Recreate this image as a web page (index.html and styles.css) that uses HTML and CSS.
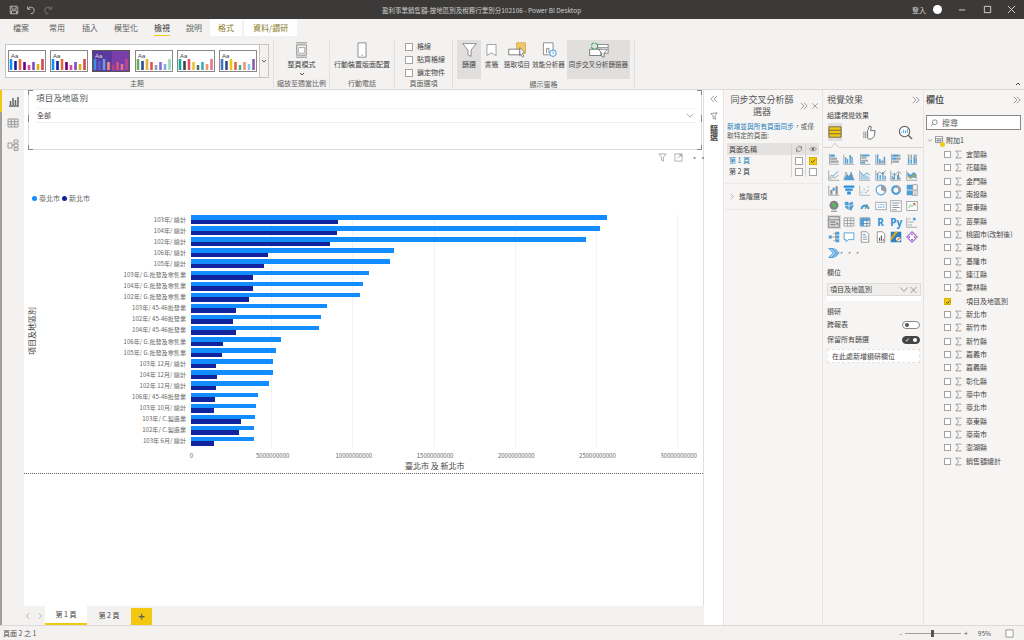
FILE: index.html
```html
<!DOCTYPE html>
<html lang="zh-Hant">
<head>
<meta charset="utf-8">
<title>Power BI Desktop</title>
<link rel="stylesheet" href="styles.css">
</head>
<body>
<svg class="defs" aria-hidden="true">
  <symbol id="dchev" viewBox="0 0 10 10"><path d="M1 1l4 4-4 4M5 1l4 4-4 4" fill="none" stroke="#777" stroke-width=".9"/></symbol>
  <symbol id="lchev" viewBox="0 0 10 10"><path d="M5 1L1 5l4 4M9 1L5 5l4 4" fill="none" stroke="#777" stroke-width=".9"/></symbol>
  <symbol id="sigma" viewBox="0 0 8 10"><path d="M7 1.500V1H1l3 4-3 4h6v-.6" fill="none" stroke="#777" stroke-width=".8"/></symbol>
  <symbol id="v1" viewBox="0 0 16 16"><path d="M2 1v14h13" fill="none" stroke="#8c9297"/><rect x="3" y="2" width="6" height="3" fill="#4f9fd6"/><rect x="3" y="6" width="9" height="3" fill="#a0a5a9"/><rect x="3" y="10" width="11" height="3" fill="#a0a5a9"/></symbol>
  <symbol id="v2" viewBox="0 0 16 16"><path d="M1 2v13h14" fill="none" stroke="#8c9297"/><path d="M3.500 14V6M6 14V8M9.500 14V3M12 14V5" stroke="#4f9fd6" stroke-width="1.800"/><path d="M3.500 8V6M9.500 6V3" stroke="#8c9297" stroke-width="1.800"/></symbol>
  <symbol id="v3" viewBox="0 0 16 16"><path d="M2 1v14h13" fill="none" stroke="#8c9297"/><rect x="3" y="2" width="11" height="2.500" fill="#4f9fd6"/><rect x="3" y="5" width="7" height="2.500" fill="#a0a5a9"/><rect x="3" y="9" width="9" height="2.500" fill="#a0a5a9"/><rect x="3" y="12" width="5" height="2" fill="#4f9fd6"/></symbol>
  <symbol id="v4" viewBox="0 0 16 16"><path d="M1 2v13h14" fill="none" stroke="#8c9297"/><path d="M3.500 14V2M6.500 14V8M9.500 14V10M12.500 14V5" stroke="#4f9fd6" stroke-width="2"/><path d="M6.500 14V11M12.500 14V9" stroke="#8c9297" stroke-width="2"/></symbol>
  <symbol id="v5" viewBox="0 0 16 16"><path d="M2 1v14" fill="none" stroke="#8c9297"/><rect x="3" y="2" width="8" height="3" fill="#4f9fd6"/><rect x="11" y="2" width="3" height="3" fill="#a0a5a9"/><rect x="3" y="6" width="5" height="3" fill="#4f9fd6"/><rect x="8" y="6" width="6" height="3" fill="#a0a5a9"/><rect x="3" y="10" width="9" height="3" fill="#a0a5a9"/></symbol>
  <symbol id="v6" viewBox="0 0 16 16"><path d="M1 15h14" stroke="#8c9297"/><path d="M3.500 14V7M7 14V9M11 14V5M13.500 14V8" stroke="#4f9fd6" stroke-width="2"/><path d="M3.500 7V2M7 9V2M11 5V2M13.500 8V2" stroke="#a0a5a9" stroke-width="2"/></symbol>
  <symbol id="v7" viewBox="0 0 16 16"><path d="M1 2v13h14" fill="none" stroke="#8c9297"/><path d="M2 11l3-3 2 2 3-4 4-3" fill="none" stroke="#4f9fd6" stroke-width="1.200"/><path d="M2 13l4-2 3 1 5-4" fill="none" stroke="#8c9297"/></symbol>
  <symbol id="v8" viewBox="0 0 16 16"><path d="M1 15l4-8 3 3 3-7 4 12z" fill="#4f9fd6"/><path d="M1 15l3-11 3 6 3-2 5 7" fill="none" stroke="#8c9297"/></symbol>
  <symbol id="v9" viewBox="0 0 16 16"><path d="M1 2v13h14" fill="none" stroke="#8c9297"/><path d="M2 5l3 4 4-1 5 3v3H2z" fill="#a9cfe9"/><path d="M2 4l4 5 4-4 4 3" fill="none" stroke="#4f9fd6" stroke-width="1.300"/></symbol>
  <symbol id="v10" viewBox="0 0 16 16"><path d="M1 2v13h14" fill="none" stroke="#8c9297"/><path d="M3.500 14V6M7 14V8M10.500 14V4M13.500 14V9" stroke="#4f9fd6" stroke-width="1.800"/><path d="M2 7l4-3 4 3 4-5" fill="none" stroke="#777"/></symbol>
  <symbol id="v11" viewBox="0 0 16 16"><path d="M1 2v13h14" fill="none" stroke="#8c9297"/><path d="M3 14V9M6 14V5M10 14V8M13 14V11" stroke="#4f9fd6" stroke-width="1.500"/><path d="M4.500 14V11M11.500 14V5" stroke="#8c9297" stroke-width="1.500"/><path d="M2 6l5 2 4-5 4 3" fill="none" stroke="#777" stroke-width=".8"/></symbol>
  <symbol id="v12" viewBox="0 0 16 16"><path d="M1 2v13h14" fill="none" stroke="#8c9297"/><path d="M2 4l4 4 4-4 4 3v6l-4-2-4 2-4-3z" fill="#4f9fd6"/><path d="M2 9l4 4 4-6 4 5" fill="none" stroke="#e0a91c" stroke-width="1.300"/></symbol>
  <symbol id="v13" viewBox="0 0 16 16"><path d="M1 2v13h14" fill="none" stroke="#8c9297"/><rect x="3" y="8" width="3" height="6" fill="#8c9297"/><rect x="6" y="5" width="3" height="4" fill="#4f9fd6"/><rect x="10" y="3" width="3" height="11" fill="#8c9297"/></symbol>
  <symbol id="v14" viewBox="0 0 16 16"><path d="M1 2h14v3H1z" fill="#2f8fd8"/><path d="M3 6h10v3H3z" fill="#2f8fd8"/><path d="M5.500 10h5v4h-5z" fill="#2f8fd8"/></symbol>
  <symbol id="v15" viewBox="0 0 16 16"><path d="M1 2v13h14" fill="none" stroke="#a0a5a9"/><g fill="#a9cfe9"><circle cx="4" cy="11" r="1.200"/><circle cx="7" cy="7" r="1.200"/><circle cx="12" cy="4" r="1.200"/></g><g fill="#8c9297"><circle cx="9" cy="11" r="1"/><circle cx="12" cy="9" r="1"/></g></symbol>
  <symbol id="v16" viewBox="0 0 16 16"><circle cx="8" cy="8" r="6.500" fill="#fff" stroke="#4f9fd6" stroke-width="1.500"/><path d="M8 8V1.500A6.500 6.500 0 0 1 14 11z" fill="#9aa0a5"/></symbol>
  <symbol id="v17" viewBox="0 0 16 16"><circle cx="8" cy="8" r="5" fill="none" stroke="#4f9fd6" stroke-width="3"/><path d="M8 3a5 5 0 0 1 4.500 7" fill="none" stroke="#9aa0a5" stroke-width="3"/></symbol>
  <symbol id="v18" viewBox="0 0 16 16"><rect x="1" y="1" width="8" height="14" fill="#4f9fd6"/><rect x="9" y="1" width="6" height="14" fill="none" stroke="#8c9297"/><path d="M9 8h6M12 8v7" stroke="#8c9297"/><path d="M1 8h8" stroke="#fff"/></symbol>
  <symbol id="v19" viewBox="0 0 16 16"><circle cx="8" cy="7" r="6" fill="#7e8488"/><path d="M5 4l5 1 1 4-3 2-2-3z" fill="#5cb85c"/><path d="M4 15h8" stroke="#8c9297" stroke-width="1.400"/></symbol>
  <symbol id="v20" viewBox="0 0 16 16"><path d="M2 3l4-1 2 2 5-2 1 6-3 6-4-1-4-3z" fill="#4f9fd6"/><path d="M2 7l6 1 6-2M8 4v10" stroke="#fff" stroke-width=".8" fill="none"/></symbol>
  <symbol id="v21" viewBox="0 0 16 16"><path d="M2 12a6 6 0 0 1 12 0h-3a3 3 0 0 0-6 0z" fill="#4f9fd6"/><path d="M8 12l3-6" stroke="#666" stroke-width="1.200"/></symbol>
  <symbol id="v23" viewBox="0 0 16 16"><rect x="1" y="1" width="14" height="14" fill="#fff" stroke="#8c9297"/><path d="M3 4h10M3 7h8M3 10h10M3 13h6" stroke="#6e7478"/></symbol>
  <symbol id="v24" viewBox="0 0 16 16"><rect x="1" y="2" width="14" height="12" fill="#fff" stroke="#8c9297"/><path d="M3 11l3-5 2 3 3-4 2 3" fill="none" stroke="#5cb85c"/><path d="M9 4h4l-2 3z" fill="#d9534f"/></symbol>
  <symbol id="v25" viewBox="0 0 16 16"><rect x="1" y="1" width="14" height="14" fill="none" stroke="#6e7478"/><path d="M1 5h14" stroke="#6e7478"/><rect x="3" y="7" width="7" height="2" fill="#8c9297"/><rect x="3" y="10.500" width="7" height="2" fill="#8c9297"/><path d="M11 8l3 3-2 1z" fill="#555"/></symbol>
  <symbol id="v26" viewBox="0 0 16 16"><path d="M1.500 2.500h13v11h-13zM1.500 6h13M1.500 10h13M6 2.500v11M10.500 2.500v11" fill="none" stroke="#8c9297"/></symbol>
  <symbol id="v27" viewBox="0 0 16 16"><path d="M1.500 2.500h13v11h-13zM1.500 6h13M1.500 10h13M6 2.500v11M10.500 2.500v11" fill="none" stroke="#5b7f99"/><rect x="2" y="3" width="12" height="3" fill="#4f9fd6"/><rect x="2" y="6" width="4" height="7" fill="#4f9fd6"/></symbol>
  <symbol id="v30" viewBox="0 0 16 16"><path d="M1 2v13h14" fill="none" stroke="#8c9297"/><path d="M3 12h5M3 8h7M3 4h3" stroke="#8c9297"/><circle cx="11" cy="4" r="2" fill="#4f9fd6"/></symbol>
  <symbol id="v31" viewBox="0 0 16 16"><rect x="1" y="6" width="4" height="4" fill="#4f9fd6"/><rect x="10" y="1" width="5" height="4" fill="#4f9fd6"/><rect x="10" y="6" width="5" height="4" fill="#4f9fd6"/><rect x="10" y="11" width="5" height="4" fill="#4f9fd6"/><path d="M5 8h5M7 3h3v10H7" fill="none" stroke="#8c9297"/></symbol>
  <symbol id="v32" viewBox="0 0 16 16"><path d="M1.500 2.500h13v9H7l-3 3v-3H1.500z" fill="#fff" stroke="#4f9fd6" stroke-width="1.200"/></symbol>
  <symbol id="v33" viewBox="0 0 16 16"><path d="M3 1h7l3 3v11H3z" fill="#fff" stroke="#777"/><path d="M5 5h4" stroke="#4f9fd6" stroke-width="1.500"/><path d="M5 8h6M5 11h6" stroke="#777"/></symbol>
  <symbol id="v34" viewBox="0 0 16 16"><path d="M3 1h7l3 3v11H3z" fill="#fff" stroke="#777"/><path d="M6 13V9M8.500 13V6M11 13v-2" stroke="#555" stroke-width="1.500"/></symbol>
  <symbol id="v35" viewBox="0 0 16 16"><rect x="1" y="1" width="14" height="14" fill="#2c7fc1"/><path d="M1 9l6-8h4L1 13z" fill="#e0a91c"/><circle cx="11" cy="11" r="3" fill="#fff"/><path d="M9 13l4-4" stroke="#e07b1c" stroke-width="1.500"/></symbol>
  <symbol id="v36" viewBox="0 0 16 16"><path d="M8 1l7 7-7 7-7-7z" fill="#fff" stroke="#a670c9" stroke-width="1.500"/><circle cx="8" cy="4.500" r="1.300" fill="#c06bc0"/><circle cx="4.500" cy="8" r="1.300" fill="#8a6bd0"/><circle cx="11.500" cy="8" r="1.300" fill="#d46a9a"/><circle cx="8" cy="11.500" r="1.300" fill="#7a6bd0"/></symbol>
  <symbol id="v37" viewBox="0 0 16 16"><path d="M1 2h6l6 6-6 6H1l6-6z" fill="#a9cfe9" stroke="#2f8fd8"/><path d="M5 2l6 6-6 6M9 2l6 6-6 6" fill="none" stroke="#2f8fd8" stroke-width="1.200"/></symbol>
</svg>

<header class="titlebar">
  <div class="qat">
    <svg class="qi" viewBox="0 0 12 12"><path d="M1.500 1.500h8l1 1v8h-9zM3.500 1.500v3.500h5v-3.500M3 10.500V7h6v3.500" fill="none" stroke="#c8c6c4"/></svg>
    <svg class="qi" viewBox="0 0 12 12"><path d="M2 1.500v3.500h3.500M2.200 5A4 4 0 1 1 5.500 10.500" fill="none" stroke="#c8c6c4"/></svg>
    <svg class="qi" viewBox="0 0 12 12"><path d="M10 1.500v3.500H6.500M9.800 5A4 4 0 1 0 6.500 10.500" fill="none" stroke="#807e7c"/></svg>
  </div>
  <div class="doc-title">盈利事業銷售額-按地區別及稅務行業別分102106 - Power BI Desktop</div>
  <div class="win">
    <span class="signin">登入</span><span class="avatar"></span>
    <svg class="wi" viewBox="0 0 10 10"><path d="M1 5.500h7" stroke="#ddd"/></svg>
    <svg class="wi" viewBox="0 0 10 10"><path d="M1.500 1.500h7v7h-7z" fill="none" stroke="#ddd"/></svg>
    <svg class="wi" viewBox="0 0 10 10"><path d="M1 1l8 8M9 1l-8 8" stroke="#ddd"/></svg>
  </div>
</header>

<nav class="tabs">
  <span class="tab">檔案</span>
  <span class="tab t-home">常用</span>
  <span class="tab">插入</span>
  <span class="tab t-tight">模型化</span>
  <span class="tab t-tight tab-active">檢視</span>
  <span class="tab t-tight">說明</span>
  <span class="tab tab-ctx">格式</span>
  <span class="tab tab-ctx tab-ctx2">資料/鑽研</span>
</nav>

<section class="ribbon">
  <div class="group g-theme">
    <div class="gallery">
      <div class="thumbs">
        <svg class="thumb" viewBox="0 0 38 22"><rect x=".5" y=".5" width="37" height="21" fill="#fff" stroke="#8a8886"/><text x="3" y="8" font-size="6" fill="#444" font-family="Liberation Sans">Aa</text><path d="M3 20V9" stroke="#118dff" stroke-width="2.600"/><path d="M7.500 20v-9" stroke="#12239e" stroke-width="2.600"/><path d="M12 20V9" stroke="#e66c37" stroke-width="2.600"/><path d="M16.500 20v-8" stroke="#6b007b" stroke-width="2.600"/><path d="M21 20v-5" stroke="#e044a7" stroke-width="2.600"/><path d="M25.500 20v-8" stroke="#744ec2" stroke-width="2.600"/><path d="M30 20v-6" stroke="#d9b300" stroke-width="2.600"/><path d="M34.500 20V9" stroke="#d64550" stroke-width="2.600"/></svg>
        <svg class="thumb" viewBox="0 0 38 22"><rect x=".5" y=".5" width="37" height="21" fill="#fff" stroke="#8a8886"/><text x="3" y="8" font-size="6" fill="#444" font-family="Liberation Sans">Aa</text><path d="M3 20V9" stroke="#118dff" stroke-width="2.600"/><path d="M7.500 20v-9" stroke="#12239e" stroke-width="2.600"/><path d="M12 20V9" stroke="#e66c37" stroke-width="2.600"/><path d="M16.500 20v-8" stroke="#6b007b" stroke-width="2.600"/><path d="M21 20v-5" stroke="#e044a7" stroke-width="2.600"/><path d="M25.500 20v-8" stroke="#744ec2" stroke-width="2.600"/><path d="M30 20v-6" stroke="#d9b300" stroke-width="2.600"/><path d="M34.500 20V9" stroke="#d64550" stroke-width="2.600"/></svg>
        <svg class="thumb" viewBox="0 0 38 22"><rect x=".5" y=".5" width="37" height="21" fill="#5a3a9e" stroke="#555"/><rect x="20" y="1" width="17" height="20" fill="#7a3ea8"/><text x="3" y="8" font-size="6" fill="#ddd" font-family="Liberation Sans">Aa</text><path d="M3 20V9" stroke="#3f8fdc" stroke-width="2.600"/><path d="M7.500 20v-9" stroke="#4a62c9" stroke-width="2.600"/><path d="M12 20V9" stroke="#6c9be0" stroke-width="2.600"/><path d="M16.500 20v-8" stroke="#f0926e" stroke-width="2.600"/><path d="M21 20v-5" stroke="#c0407a" stroke-width="2.600"/><path d="M25.500 20v-8" stroke="#d8527a" stroke-width="2.600"/><path d="M30 20v-6" stroke="#e07b8a" stroke-width="2.600"/><path d="M34.500 20V9" stroke="#b84a90" stroke-width="2.600"/></svg>
        <svg class="thumb" viewBox="0 0 38 22"><rect x=".5" y=".5" width="37" height="21" fill="#fff" stroke="#8a8886"/><text x="3" y="8" font-size="6" fill="#444" font-family="Liberation Sans">Aa</text><path d="M3 20V9" stroke="#5eb35c" stroke-width="2.600"/><path d="M7.500 20v-9" stroke="#2f4b8f" stroke-width="2.600"/><path d="M12 20V9" stroke="#e3b23c" stroke-width="2.600"/><path d="M16.500 20v-8" stroke="#d9534f" stroke-width="2.600"/><path d="M21 20v-5" stroke="#8aa0b8" stroke-width="2.600"/><path d="M25.500 20v-8" stroke="#8a6bd0" stroke-width="2.600"/><path d="M30 20v-6" stroke="#7fb0d8" stroke-width="2.600"/><path d="M34.500 20V9" stroke="#9bd6b8" stroke-width="2.600"/></svg>
        <svg class="thumb" viewBox="0 0 38 22"><rect x=".5" y=".5" width="37" height="21" fill="#fff" stroke="#8a8886"/><text x="3" y="8" font-size="6" fill="#444" font-family="Liberation Sans">Aa</text><path d="M3 20V9" stroke="#13a89e" stroke-width="2.600"/><path d="M7.500 20v-9" stroke="#37474f" stroke-width="2.600"/><path d="M12 20V9" stroke="#e6505a" stroke-width="2.600"/><path d="M16.500 20v-8" stroke="#e8c33a" stroke-width="2.600"/><path d="M21 20v-5" stroke="#5a6b75" stroke-width="2.600"/><path d="M25.500 20v-8" stroke="#2fb5a8" stroke-width="2.600"/><path d="M30 20v-6" stroke="#f0926e" stroke-width="2.600"/><path d="M34.500 20V9" stroke="#e07a8a" stroke-width="2.600"/></svg>
        <svg class="thumb" viewBox="0 0 38 22"><rect x=".5" y=".5" width="37" height="21" fill="#fff" stroke="#8a8886"/><text x="3" y="8" font-size="6" fill="#444" font-family="Liberation Sans">Aa</text><path d="M3 20V9" stroke="#4472c4" stroke-width="2.600"/><path d="M7.500 20v-9" stroke="#2f4b8f" stroke-width="2.600"/><path d="M12 20V9" stroke="#f2c511" stroke-width="2.600"/><path d="M16.500 20v-8" stroke="#e6603c" stroke-width="2.600"/><path d="M21 20v-5" stroke="#3fb28f" stroke-width="2.600"/><path d="M25.500 20v-8" stroke="#f0926e" stroke-width="2.600"/><path d="M30 20v-6" stroke="#8ac6e8" stroke-width="2.600"/><path d="M34.500 20V9" stroke="#8a5fa8" stroke-width="2.600"/></svg>
      </div>
      <div class="gal-more"><svg class="mini" viewBox="0 0 6 6"><path d="M1 2l2 2 2-2" fill="none" stroke="#555"/></svg></div>
    </div>
    <div class="g-label">主題</div>
  </div>
  <div class="group g-scale">
    <div class="g-body">
      <div class="rbtn">
        <svg class="ricon" viewBox="0 0 20 20"><path d="M3 1h14M3 19h14M4 3.500h12v13H4z" fill="none" stroke="#777"/><path d="M6 7h8v7H6z" fill="#fff" stroke="#999"/></svg>
        <span>整頁模式</span>
        <svg class="mini" viewBox="0 0 6 6"><path d="M1 2l2 2 2-2" fill="none" stroke="#555"/></svg>
      </div>
    </div>
    <div class="g-label">縮放至適當比例</div>
  </div>
  <div class="group g-mobile">
    <div class="g-body">
      <div class="rbtn">
        <svg class="ricon" viewBox="4 0 12 20"><path d="M5 1h10v18H5z" fill="#fff" stroke="#777"/><path d="M9 16.500h2" stroke="#777"/></svg>
        <span>行動裝置版面配置</span>
      </div>
    </div>
    <div class="g-label">行動電話</div>
  </div>
  <div class="group g-page">
    <div class="checks">
      <label class="chk"><i class="box"></i>格線</label>
      <label class="chk"><i class="box"></i>貼齊格線</label>
      <label class="chk"><i class="box"></i>鎖定物件</label>
    </div>
    <div class="g-label">頁面選項</div>
  </div>
  <div class="group g-panes">
    <div class="g-body panes">
      <div class="rbtn pane pane-filter on">
        <svg class="ricon" viewBox="0 0 20 20"><path d="M1.500 2h17l-6.500 8v8l-4-2v-6z" fill="#fff" stroke="#777"/></svg>
        <span>篩選</span>
      </div>
      <div class="rbtn pane pane-book">
        <svg class="ricon" viewBox="0 0 20 20"><path d="M3 1.500h14v17l-7-4-7 4z" fill="#fff" stroke="#777"/></svg>
        <span>書籤</span>
      </div>
      <div class="rbtn pane pane-sel">
        <svg class="ricon" viewBox="0 0 28 20"><rect x="13" y="1" width="11" height="13" fill="#f2c66d" stroke="#d9a63a"/><path d="M3 9h14v7H3z" fill="#fff" stroke="#666"/><path d="M17 7l6 6-3 1 2 4-2 1-2-4-1 2z" fill="#fff" stroke="#555" stroke-width=".8"/></svg>
        <span>選取項目</span>
      </div>
      <div class="rbtn pane pane-perf">
        <svg class="ricon" viewBox="0 0 24 20"><path d="M5 1h12v15H5z" fill="#fff" stroke="#777"/><path d="M9 14V8h3v6" fill="none" stroke="#777"/><circle cx="17" cy="14" r="4" fill="#fff" stroke="#3b93d6" stroke-width="1.200"/><path d="M17 12v2h1.500" fill="none" stroke="#3b93d6"/></svg>
        <span>效能分析器</span>
      </div>
      <div class="rbtn pane pane-sync on">
        <svg class="ricon" viewBox="0 0 28 20"><rect x="13" y="3" width="13" height="11" fill="#fff" stroke="#777"/><path d="M13 7h13" stroke="#777"/><rect x="3" y="9" width="14" height="8" fill="#fff" stroke="#666"/><path d="M14 9h11l-4 5v5l-3-1v-4z" fill="#fff" stroke="#666"/><circle cx="9" cy="5" r="4" fill="none" stroke="#3fa35c" stroke-width="1.300" stroke-dasharray="5 1.500"/></svg>
        <span>同步交叉分析篩選器</span>
      </div>
    </div>
    <div class="g-label">顯示窗格</div>
  </div>
  <svg class="collapse" viewBox="0 0 6 6"><path d="M1 4l2-2 2 2" fill="none" stroke="#444"/></svg>
</section>

<main class="main">
  <aside class="rail">
    <div class="rail-item rail-on"><svg class="rail-i" viewBox="0 0 12 12"><path d="M1 11h10M2.500 10V6M5 10V3M7.500 10V5M10 10V2" stroke="#666" stroke-width="1.500"/></svg></div>
    <div class="rail-item"><svg class="rail-i" viewBox="0 0 12 12"><path d="M1 2h10v8H1zM1 4.700h10M1 7.300h10M4.300 2v8M7.700 2v8" fill="none" stroke="#888" stroke-width=".8"/></svg></div>
    <div class="rail-item"><svg class="rail-i" viewBox="0 0 12 12"><path d="M1 4h4v5H1zM7 1h4v3H7zM7 5h4v3H7zM7 9h4v2.500H7zM5 6h2" fill="none" stroke="#888" stroke-width=".8"/></svg></div>
  </aside>

  <div class="canvas-col">
    <div class="canvas">
      <div class="slicer">
        <i class="h h-tl"></i><i class="h h-tr"></i><i class="h h-bl"></i><i class="h h-br"></i><i class="h h-ml"></i><i class="h h-mr"></i>
        <div class="slicer-title">項目及地區別</div>
        <div class="slicer-drop"><span>全部</span><svg class="drop-i" viewBox="0 0 10 6"><path d="M1 1l4 4 4-4" fill="none" stroke="#777" stroke-width=".8"/></svg></div>
      </div>

      <div class="visual">
        <div class="vis-tools">
          <svg class="ti" viewBox="0 0 10 10"><path d="M1 1h8L6 5v4L4 8V5z" fill="none" stroke="#888" stroke-width=".7"/></svg>
          <svg class="ti" viewBox="0 0 10 10"><path d="M1 1h8v8H1zM4 6l4-4M5.500 2H8v2.500" fill="none" stroke="#888" stroke-width=".7"/></svg>
          <span class="dots">···</span>
        </div>
        <div class="legend">
          <i class="dot d-l"></i><span>臺北市</span><i class="dot d-d"></i><span>新北市</span>
        </div>
        <div class="chart-body">
          <div class="ytitle">項目及地區別</div>
          <div class="rows">
            <div class="row"><span class="rl">103年/ 總計</span><span class="rb"><i class="b bl" style="width:416px"></i><i class="b bd" style="width:147px"></i></span></div>
            <div class="row"><span class="rl">104年/ 總計</span><span class="rb"><i class="b bl" style="width:409px"></i><i class="b bd" style="width:146px"></i></span></div>
            <div class="row"><span class="rl">102年/ 總計</span><span class="rb"><i class="b bl" style="width:395px"></i><i class="b bd" style="width:139px"></i></span></div>
            <div class="row"><span class="rl">106年/ 總計</span><span class="rb"><i class="b bl" style="width:203px"></i><i class="b bd" style="width:77px"></i></span></div>
            <div class="row"><span class="rl">105年/ 總計</span><span class="rb"><i class="b bl" style="width:199px"></i><i class="b bd" style="width:73px"></i></span></div>
            <div class="row"><span class="rl">103年/ G.批發及零售業</span><span class="rb"><i class="b bl" style="width:178px"></i><i class="b bd" style="width:62px"></i></span></div>
            <div class="row"><span class="rl">104年/ G.批發及零售業</span><span class="rb"><i class="b bl" style="width:172px"></i><i class="b bd" style="width:62px"></i></span></div>
            <div class="row"><span class="rl">102年/ G.批發及零售業</span><span class="rb"><i class="b bl" style="width:169px"></i><i class="b bd" style="width:58px"></i></span></div>
            <div class="row"><span class="rl">103年/ 45-46批發業</span><span class="rb"><i class="b bl" style="width:136px"></i><i class="b bd" style="width:45px"></i></span></div>
            <div class="row"><span class="rl">102年/ 45-46批發業</span><span class="rb"><i class="b bl" style="width:130px"></i><i class="b bd" style="width:42px"></i></span></div>
            <div class="row"><span class="rl">104年/ 45-46批發業</span><span class="rb"><i class="b bl" style="width:128px"></i><i class="b bd" style="width:45px"></i></span></div>
            <div class="row"><span class="rl">106年/ G.批發及零售業</span><span class="rb"><i class="b bl" style="width:90px"></i><i class="b bd" style="width:32px"></i></span></div>
            <div class="row"><span class="rl">105年/ G.批發及零售業</span><span class="rb"><i class="b bl" style="width:85px"></i><i class="b bd" style="width:31px"></i></span></div>
            <div class="row"><span class="rl">103年 12月/ 總計</span><span class="rb"><i class="b bl" style="width:82px"></i><i class="b bd" style="width:25px"></i></span></div>
            <div class="row"><span class="rl">104年 12月/ 總計</span><span class="rb"><i class="b bl" style="width:82px"></i><i class="b bd" style="width:26px"></i></span></div>
            <div class="row"><span class="rl">102年 12月/ 總計</span><span class="rb"><i class="b bl" style="width:78px"></i><i class="b bd" style="width:25px"></i></span></div>
            <div class="row"><span class="rl">106年/ 45-46批發業</span><span class="rb"><i class="b bl" style="width:67px"></i><i class="b bd" style="width:24px"></i></span></div>
            <div class="row"><span class="rl">103年 10月/ 總計</span><span class="rb"><i class="b bl" style="width:65px"></i><i class="b bd" style="width:23px"></i></span></div>
            <div class="row"><span class="rl">103年/ C.製造業</span><span class="rb"><i class="b bl" style="width:64px"></i><i class="b bd" style="width:50px"></i></span></div>
            <div class="row"><span class="rl">102年/ C.製造業</span><span class="rb"><i class="b bl" style="width:63px"></i><i class="b bd" style="width:48px"></i></span></div>
            <div class="row"><span class="rl">103年 6月/ 總計</span><span class="rb"><i class="b bl" style="width:63px"></i><i class="b bd" style="width:23px"></i></span></div>
          </div>
        </div>
        <div class="axis">
          <span>0</span><span>5000000000</span><span>10000000000</span><span>15000000000</span><span>20000000000</span><span>25000000000</span><span>30000000000</span>
        </div>
        <div class="axis-title">臺北市 及 新北市</div>
      </div>
    </div>
    <div class="pagebar">
      <svg class="pa" viewBox="0 0 6 8"><path d="M4 1L1.500 4 4 7" fill="none" stroke="#bbb"/></svg>
      <svg class="pa" viewBox="0 0 6 8"><path d="M2 1l2.500 3L2 7" fill="none" stroke="#bbb"/></svg>
      <span class="ptab ptab-on">第 1 頁</span>
      <span class="ptab">第 2 頁</span>
      <span class="padd">+</span>
    </div>
  </div>

  <div class="filter-strip">
    <svg class="fs-i" viewBox="0 0 10 10"><use href="#lchev"/></svg>
    <svg class="fs-f" viewBox="0 0 10 10"><path d="M1 2l8-1-3 4 1 4-3-1V5z" fill="none" stroke="#666" stroke-width=".8"/></svg>
    <span class="fs-t">篩選</span>
  </div>

  <aside class="panel p-sync">
    <div class="sync-head">
      <div class="sync-title">同步交叉分析篩選器</div>
      <svg class="head-i" viewBox="0 0 10 10"><use href="#dchev"/></svg>
      <svg class="head-i" viewBox="0 0 10 10"><path d="M1.500 1.500l7 7M8.500 1.500l-7 7" stroke="#777" stroke-width=".8"/></svg>
    </div>
    <p class="sync-note"><span class="link">新增並與所有頁面同步</span>，或僅<br>取特定的頁面:</p>
    <div class="sync-table">
      <div class="st-row st-head"><span class="st-name">頁面名稱</span><span class="st-c"><svg class="st-i" viewBox="0 0 10 10"><path d="M2 6.500A3.500 3.500 0 0 1 8 3M8 1v2.500H5.500M8 3.500A3.500 3.500 0 0 1 2 7M2 9V6.500h2.500" fill="none" stroke="#666" stroke-width=".7"/></svg></span><span class="st-c"><svg class="st-i" viewBox="0 0 10 10"><path d="M.5 5C3 2 7 2 9.500 5 7 8 3 8 .5 5z" fill="none" stroke="#666" stroke-width=".7"/><circle cx="5" cy="5" r="1.500" fill="#666"/></svg></span></div>
      <div class="st-row"><span class="st-name link">第 1 頁</span><span class="st-c"><i class="box"></i></span><span class="st-c"><i class="box box-on"><svg viewBox="0 0 8 8"><path d="M1.500 4l2 2 3-4" fill="none" stroke="#333"/></svg></i></span></div>
      <div class="st-row"><span class="st-name">第 2 頁</span><span class="st-c"><i class="box"></i></span><span class="st-c"><i class="box"></i></span></div>
    </div>
    <div class="adv"><svg class="adv-i" viewBox="0 0 6 10"><path d="M1 1l4 4-4 4" fill="none" stroke="#777" stroke-width=".8"/></svg><span>進階選項</span></div>
  </aside>

  <aside class="panel p-viz">
    <div class="p-head"><span class="p-title">視覺效果</span><svg class="head-i" viewBox="0 0 10 10"><use href="#dchev"/></svg></div>
    <div class="viz-sub">組建視覺效果</div>
    <div class="viz-tabs">
      <span class="vt vt-on"><svg viewBox="0 0 16 16"><rect x="1" y="2" width="14" height="12" fill="#f2c811"/><path d="M1 2h14M1 6h14M1 10h14M1 14h14M1 2v12M15 2v12" fill="none" stroke="#555" stroke-width=".9"/></svg></span>
      <span class="vt"><svg viewBox="0 0 16 16"><path d="M6 14V6l2-5 2 1-1 4h5l-1 6-3 3H7z" fill="#fff" stroke="#666"/><path d="M2 7v7M4 7v7" stroke="#888"/></svg></span>
      <span class="vt"><svg viewBox="0 0 16 16"><circle cx="7" cy="7" r="5.500" fill="#fff" stroke="#666" stroke-width="1.200"/><path d="M11 11l4 4" stroke="#666" stroke-width="1.600"/><path d="M4 8.500V7M6 8.500V5M8 8.500V6M10 8.500V4" stroke="#4f9fd6"/></svg></span>
    </div>
    <div class="viz-grid">
      <svg class="vi" viewBox="0 0 16 16"><use href="#v1"/></svg>
      <svg class="vi" viewBox="0 0 16 16"><use href="#v2"/></svg>
      <svg class="vi" viewBox="0 0 16 16"><use href="#v3"/></svg>
      <svg class="vi" viewBox="0 0 16 16"><use href="#v4"/></svg>
      <svg class="vi" viewBox="0 0 16 16"><use href="#v5"/></svg>
      <svg class="vi" viewBox="0 0 16 16"><use href="#v6"/></svg>
      <svg class="vi" viewBox="0 0 16 16"><use href="#v7"/></svg>
      <svg class="vi" viewBox="0 0 16 16"><use href="#v8"/></svg>
      <svg class="vi" viewBox="0 0 16 16"><use href="#v9"/></svg>
      <svg class="vi" viewBox="0 0 16 16"><use href="#v10"/></svg>
      <svg class="vi" viewBox="0 0 16 16"><use href="#v11"/></svg>
      <svg class="vi" viewBox="0 0 16 16"><use href="#v12"/></svg>
      <svg class="vi" viewBox="0 0 16 16"><use href="#v13"/></svg>
      <svg class="vi" viewBox="0 0 16 16"><use href="#v14"/></svg>
      <svg class="vi" viewBox="0 0 16 16"><use href="#v15"/></svg>
      <svg class="vi" viewBox="0 0 16 16"><use href="#v16"/></svg>
      <svg class="vi" viewBox="0 0 16 16"><use href="#v17"/></svg>
      <svg class="vi" viewBox="0 0 16 16"><use href="#v18"/></svg>
      <svg class="vi" viewBox="0 0 16 16"><use href="#v19"/></svg>
      <svg class="vi" viewBox="0 0 16 16"><use href="#v20"/></svg>
      <svg class="vi" viewBox="0 0 16 16"><use href="#v21"/></svg>
      <svg class="vi" viewBox="0 0 16 16"><rect x="1" y="3" width="14" height="10" fill="#fff" stroke="#8c9297"/><text x="8" y="10.500" text-anchor="middle" font-size="6" fill="#4f9fd6" font-family="Liberation Sans">123</text></svg>
      <svg class="vi" viewBox="0 0 16 16"><use href="#v23"/></svg>
      <svg class="vi" viewBox="0 0 16 16"><use href="#v24"/></svg>
      <span class="vi-sel"><svg class="vi" viewBox="0 0 16 16"><use href="#v25"/></svg></span>
      <svg class="vi" viewBox="0 0 16 16"><use href="#v26"/></svg>
      <svg class="vi" viewBox="0 0 16 16"><use href="#v27"/></svg>
      <span class="vi-t">R</span>
      <span class="vi-t">Py</span>
      <svg class="vi" viewBox="0 0 16 16"><use href="#v30"/></svg>
      <svg class="vi" viewBox="0 0 16 16"><use href="#v31"/></svg>
      <svg class="vi" viewBox="0 0 16 16"><use href="#v32"/></svg>
      <svg class="vi" viewBox="0 0 16 16"><use href="#v33"/></svg>
      <svg class="vi" viewBox="0 0 16 16"><use href="#v34"/></svg>
      <svg class="vi" viewBox="0 0 16 16"><use href="#v35"/></svg>
      <svg class="vi" viewBox="0 0 16 16"><use href="#v36"/></svg>
      <svg class="vi" viewBox="0 0 16 16"><use href="#v37"/></svg>
      <span class="vi-more">···</span>
    </div>
    <div class="sec-label">欄位</div>
    <div class="well">
      <div class="well-field"><span>項目及地區別</span><svg class="well-i" viewBox="0 0 18 8"><path d="M.5 1.500l3.500 4 3.500-4M10.500 1l6 6M16.500 1l-6 6" fill="none" stroke="#777" stroke-width=".7"/></svg></div>
    </div>
    <div class="sec-label sec-drill">鑽研</div>
    <div class="tog-row"><span>跨報表</span><span class="tog"><i></i></span></div>
    <div class="tog-row"><span>保留所有篩選</span><span class="tog tog-on"><b>✓</b><i></i></span></div>
    <div class="drop-zone">在此處新增鑽研欄位</div>
  </aside>

  <aside class="panel p-fields">
    <div class="p-head"><span class="p-title p-strong">欄位</span><svg class="head-i" viewBox="0 0 10 10"><use href="#dchev"/></svg></div>
    <div class="search"><svg class="search-i" viewBox="0 0 10 10"><circle cx="6" cy="4" r="3" fill="none" stroke="#555" stroke-width=".8"/><path d="M3.800 6.200L1 9" stroke="#555" stroke-width=".8"/></svg><span>搜尋</span></div>
    <div class="tree-root">
      <svg class="tree-c" viewBox="0 0 8 6"><path d="M1 1l3 3 3-3" fill="none" stroke="#777" stroke-width=".8"/></svg>
      <span class="tree-i"><svg viewBox="0 0 10 9"><path d="M.5.500h8v7h-8zM.5 3h8M.5 5.300h8M3.200 3v4.500M5.800 3v4.500" fill="#fff" stroke="#666" stroke-width=".7"/></svg><i class="tree-dot"></i></span>
      <span>附加1</span>
    </div>
    <ul class="fields">
      <li class="f"><i class="box"></i><svg class="sg" viewBox="0 0 8 10"><use href="#sigma"/></svg><span>宜蘭縣</span></li>
      <li class="f"><i class="box"></i><svg class="sg" viewBox="0 0 8 10"><use href="#sigma"/></svg><span>花蓮縣</span></li>
      <li class="f"><i class="box"></i><svg class="sg" viewBox="0 0 8 10"><use href="#sigma"/></svg><span>金門縣</span></li>
      <li class="f"><i class="box"></i><svg class="sg" viewBox="0 0 8 10"><use href="#sigma"/></svg><span>南投縣</span></li>
      <li class="f"><i class="box"></i><svg class="sg" viewBox="0 0 8 10"><use href="#sigma"/></svg><span>屏東縣</span></li>
      <li class="f"><i class="box"></i><svg class="sg" viewBox="0 0 8 10"><use href="#sigma"/></svg><span>苗栗縣</span></li>
      <li class="f"><i class="box"></i><svg class="sg" viewBox="0 0 8 10"><use href="#sigma"/></svg><span>桃園市(改制後)</span></li>
      <li class="f"><i class="box"></i><svg class="sg" viewBox="0 0 8 10"><use href="#sigma"/></svg><span>高雄市</span></li>
      <li class="f"><i class="box"></i><svg class="sg" viewBox="0 0 8 10"><use href="#sigma"/></svg><span>基隆市</span></li>
      <li class="f"><i class="box"></i><svg class="sg" viewBox="0 0 8 10"><use href="#sigma"/></svg><span>連江縣</span></li>
      <li class="f"><i class="box"></i><svg class="sg" viewBox="0 0 8 10"><use href="#sigma"/></svg><span>雲林縣</span></li>
      <li class="f"><i class="box box-on"><svg viewBox="0 0 8 8"><path d="M1.500 4l2 2 3-4" fill="none" stroke="#333"/></svg></i><span class="sg"></span><span>項目及地區別</span></li>
      <li class="f"><i class="box"></i><svg class="sg" viewBox="0 0 8 10"><use href="#sigma"/></svg><span>新北市</span></li>
      <li class="f"><i class="box"></i><svg class="sg" viewBox="0 0 8 10"><use href="#sigma"/></svg><span>新竹市</span></li>
      <li class="f"><i class="box"></i><svg class="sg" viewBox="0 0 8 10"><use href="#sigma"/></svg><span>新竹縣</span></li>
      <li class="f"><i class="box"></i><svg class="sg" viewBox="0 0 8 10"><use href="#sigma"/></svg><span>嘉義市</span></li>
      <li class="f"><i class="box"></i><svg class="sg" viewBox="0 0 8 10"><use href="#sigma"/></svg><span>嘉義縣</span></li>
      <li class="f"><i class="box"></i><svg class="sg" viewBox="0 0 8 10"><use href="#sigma"/></svg><span>彰化縣</span></li>
      <li class="f"><i class="box"></i><svg class="sg" viewBox="0 0 8 10"><use href="#sigma"/></svg><span>臺中市</span></li>
      <li class="f"><i class="box"></i><svg class="sg" viewBox="0 0 8 10"><use href="#sigma"/></svg><span>臺北市</span></li>
      <li class="f"><i class="box"></i><svg class="sg" viewBox="0 0 8 10"><use href="#sigma"/></svg><span>臺東縣</span></li>
      <li class="f"><i class="box"></i><svg class="sg" viewBox="0 0 8 10"><use href="#sigma"/></svg><span>臺南市</span></li>
      <li class="f"><i class="box"></i><svg class="sg" viewBox="0 0 8 10"><use href="#sigma"/></svg><span>澎湖縣</span></li>
      <li class="f"><i class="box"></i><svg class="sg" viewBox="0 0 8 10"><use href="#sigma"/></svg><span>銷售額總計</span></li>
    </ul>
  </aside>
</main>

<footer class="status">
  <span class="st-page">頁面 2 之 1</span>
  <div class="zoom">
    <span>-</span>
    <span class="slider"><i></i></span>
    <span>+</span>
    <span class="pct">95%</span>
    <svg class="fit" viewBox="0 0 10 10"><path d="M1 1h8v8H1z" fill="#fff" stroke="#777" stroke-width=".8"/></svg>
  </div>
</footer>
</body>
</html>
```

FILE: styles.css
```css
* { box-sizing: border-box; }
html, body { margin: 0; padding: 0; }
body {
  width: 1024px; height: 640px; overflow: hidden;
  display: flex; flex-direction: column;
  background: #f3f2f1; color: #444;
  font-family: "Noto Sans CJK TC", "Noto Sans", sans-serif;
  font-size: 7px; line-height: 1;
}
i { display: block; font-style: normal; }
svg { display: block; }
.defs { width: 0; height: 0; position: absolute; }

/* title bar */
.titlebar { height: 19px; flex: none; background: #3b3a39; color: #d8d6d4; display: flex; align-items: center; }
.qat { display: flex; gap: 7px; padding-left: 9px; width: 382px; }
.qi { width: 10px; height: 10px; }
.doc-title { width: 300px; font-size: 6.500px; line-height: 10px; white-space: nowrap; color: #cfcdcb; }
.win { margin-left: auto; display: flex; align-items: center; }
.signin { font-size: 7px; line-height: 10px; margin-right: 7px; }
.avatar { width: 9px; height: 9px; border-radius: 50%; background: #fff; margin-right: 16px; }
.wi { width: 9px; height: 9px; margin-right: 15.500px; }
.wi:last-child { margin-right: 8px; }

/* tabs */
.tabs { height: 21px; flex: none; display: flex; padding-left: 13px; gap: 17px; font-size: 8px; color: #605e5c; }
.tab { height: 17px; display: flex; align-items: center; position: relative; padding-top: 1px; }
.t-home { margin-left: 3px; }
.t-tight { margin-left: -1px; }
.tab-active { color: #333; }
.tab-active::after { content: ""; position: absolute; left: 0; right: 0; bottom: 0; height: 1.500px; background: #f2c811; }
.tab-ctx { background: #fff; color: #8a7a1f; padding: 1px 8px 0; margin-left: -9px; }
.tab-ctx2 { margin-left: -15px; padding: 1px 9px 0; }

/* ribbon */
.ribbon { height: 50px; flex: none; display: flex; position: relative; border-bottom: 1px solid #dcdad8; }
.group { display: flex; flex-direction: column; border-right: 1px solid #e1dfdd; height: 48px; }
.g-label { margin-top: auto; height: 10px; line-height: 10px; text-align: center; font-size: 7px; color: #605e5c; }
.g-body { display: flex; justify-content: center; }
.g-theme { width: 274px; padding: 4px 4px 0 5px; }
.g-scale { width: 56px; }
.g-mobile { width: 65px; }
.g-page { width: 58px; }
.g-panes { width: 182px; }
.gallery { height: 35px; width: 264px; border: 1px solid #c8c6c4; background: #fff; display: flex; }
.thumbs { display: flex; flex: 1; gap: 4.200px; padding: 5px 0 0 2px; }
.thumb { width: 38px; height: 22px; flex: none; }
.gal-more { width: 9px; border-left: 1px solid #c8c6c4; background: #f3f2f1; display: flex; align-items: center; justify-content: center; }
.mini { width: 6px; height: 6px; }
.rbtn { display: flex; flex-direction: column; align-items: center; font-size: 7px; color: #444; white-space: nowrap; }
.ricon { width: 17px; height: 16px; margin-top: 2px; }
.rbtn > span { height: 12px; line-height: 12px; }
.rbtn .mini { margin-top: 1px; }
.g-mobile .ricon { width: 10px; }
.checks { display: flex; flex-direction: column; gap: 4px; padding: 2px 0 0 10px; }
.chk { display: flex; align-items: center; gap: 4px; height: 9px; font-size: 7px; }
.box { width: 8px; height: 8px; flex: none; border: 1px solid #a6a4a2; background: #fff; }
.box-on { background: #f2c811; border-color: #d9b300; }
.box-on svg { width: 6px; height: 6px; }
.panes { justify-content: flex-start; padding-left: 4px; height: 39px; }
.pane { height: 39px; }
.pane.on { background: #e1dfdd; }
.pane-filter { width: 24px; margin-right: 3px; }
.pane-book { width: 15px; margin-right: 3px; }
.pane-book .ricon { width: 13px; }
.pane-sel { width: 30px; }
.pane-sel .ricon { width: 23px; }
.pane-perf { width: 33px; margin-right: 2px; }
.pane-perf .ricon { width: 20px; }
.pane-sync { width: 63px; }
.pane-sync .ricon { width: 23px; }
.pane-perf span, .pane-sel span { font-size: 6.500px; }
.pane-sync span { font-size: 6.600px; }
.collapse { position: absolute; right: 3px; bottom: 2px; width: 6px; height: 6px; }

/* main layout */
.main { flex: 1; display: flex; min-height: 0; }
.rail { width: 24px; flex: none; border-left: 2px solid #a19f9d; }
.rail-item { height: 22px; display: flex; align-items: center; justify-content: center; margin-left: -2px; padding-left: 2px; }
.rail-on { border-left: 2px solid #f2c811; }
.rail-i { width: 12px; height: 12px; }

.canvas-col { width: 680px; flex: none; display: flex; flex-direction: column; }
.canvas { flex: 1; background: #fff; border-right: 1px solid #e1dfdd; min-height: 0; }
.slicer { height: 60px; margin: 0 1px 0 4px; border-bottom: 1px solid #dcdcdc; border-left: 1px solid #dcdcdc; border-right: 1px solid #dcdcdc; position: relative; padding: 2px 5px 0 7px; }
.h { position: absolute; border-color: #8a8886; border-style: solid; border-width: 0; }
.h-tl { left: -1px; top: 0; width: 5px; height: 5px; border-left-width: 1.500px; border-top-width: 1.500px; }
.h-tr { right: -1px; top: 0; width: 5px; height: 5px; border-right-width: 1.500px; border-top-width: 1.500px; }
.h-bl { left: -1px; bottom: -1px; width: 5px; height: 5px; border-left-width: 1.500px; border-bottom-width: 1.500px; }
.h-br { right: -1px; bottom: -1px; width: 5px; height: 5px; border-right-width: 1.500px; border-bottom-width: 1.500px; }
.h-ml { left: -1px; top: 25px; height: 7px; border-left-width: 1.500px; }
.h-mr { right: -1px; top: 25px; height: 7px; border-right-width: 1.500px; }
.slicer-title { font-size: 8.500px; height: 10px; line-height: 10px; color: #555; letter-spacing: .2px; }
.slicer-drop { height: 15px; margin: 6px 0 0 0; border-bottom: 1px solid #f0f0f0; border-top: 1px solid #f3f3f3; display: flex; align-items: center; justify-content: space-between; padding: 0 2px 0 1px; font-size: 7px; }
.drop-i { width: 8px; height: 5px; }

.visual { height: 323px; border-bottom: 1px dotted #666; }
.vis-tools { display: flex; justify-content: flex-end; align-items: center; gap: 7px; height: 13px; margin-top: 1px; padding-right: 4px; }
.ti { width: 9px; height: 9px; }
.dots { color: #888; font-size: 9px; width: 9px; letter-spacing: -.5px; }
.legend { display: flex; align-items: center; margin: 29px 0 0 8px; height: 10px; font-size: 7px; color: #666; }
.dot { width: 5px; height: 5px; border-radius: 50%; margin-right: 2px; }
.legend span { margin-right: 2px; }
.d-l { background: #118dff; }
.d-d { background: #12239e; }
.chart-body { display: flex; margin: 11px 0 0 4px; }
.ytitle { width: 12px; writing-mode: vertical-rl; text-orientation: sideways; transform: rotate(180deg); text-align: center; font-size: 8px; color: #444; }
.rows { width: 655px; display: flex; flex-direction: column; }
.row { height: 11.100px; display: flex; align-items: center; }
.rl { width: 146px; text-align: right; font-size: 6.100px; line-height: 8px; color: #666; white-space: nowrap; }
.rb { flex: 1; margin-left: 5px; display: flex; flex-direction: column; align-self: stretch; justify-content: center; background: repeating-linear-gradient(to right, transparent 0 80.200px, #f2f2f2 80.200px 81.200px); }
.b { height: 4.500px; }
.bl { background: #118dff; }
.bd { background: #12239e; }
.axis { display: flex; margin: 5px 0 0 126.900px; font-size: 6px; line-height: 8px; color: #666; }
.axis span { width: 81.200px; text-align: center; flex: none; }
.axis-title { margin: 1px 0 0 381px; font-size: 8px; line-height: 10px; color: #444; white-space: nowrap; }

.pagebar { height: 19px; flex: none; display: flex; align-items: flex-end; padding-left: 1px; }
.pa { width: 6px; height: 8px; margin: 0 6px 5px 0; }
.ptab { width: 42px; height: 19px; display: flex; align-items: center; justify-content: center; font-size: 7px; color: #444; }
.pa + .ptab { margin-left: -4px; }
.ptab + .ptab { margin-left: 1px; }
.ptab-on { background: #fff; border-bottom: 2px solid #f2c811; }
.padd { width: 21px; height: 17px; margin-left: 1px; background: #f2c811; display: flex; align-items: center; justify-content: center; font-size: 11px; font-weight: 700; color: #605e5c; }

.filter-strip { width: 19px; flex: none; display: flex; flex-direction: column; align-items: center; padding-top: 5px; background: #fff; }
.fs-i { width: 8px; height: 8px; }
.fs-f { width: 8px; height: 8px; margin-top: 9px; }
.fs-t { writing-mode: vertical-rl; font-size: 8px; font-weight: 700; color: #444; margin-top: 5px; }

.panel { flex: none; border-left: 1px solid #e6e4e2; background: #f6f5f4; }
.p-sync { width: 99px; padding: 4px 3px 0 3px; }
.sync-head { display: flex; align-items: center; height: 24px; }
.sync-title { width: 68px; margin: 0 1px; font-size: 9px; line-height: 12px; text-align: center; color: #555; }
.sync-head .head-i { margin-left: 3px; width: 8px; height: 8px; }
.sync-note { margin: 4px 0 0 0; font-size: 6.700px; line-height: 9px; color: #555; white-space: nowrap; }
.link { color: #1d7fb8; }
.sync-table { margin-top: 3px; }
.st-row { display: flex; height: 11px; align-items: center; font-size: 7px; }
.st-head { height: 12px; background: #e4e2e0; }
.st-name { flex: 1; padding-left: 2px; }
.st-c { width: 14px; height: 100%; display: flex; align-items: center; justify-content: center; border-left: 1px solid #d6d4d2; }
.st-i { width: 8px; height: 8px; }
.adv { display: flex; align-items: center; gap: 5px; margin: 6px -3px 0; padding: 0 6px; height: 27px; border-top: 1px solid #ebe9e7; border-bottom: 1px solid #ebe9e7; font-size: 7px; }
.adv-i { width: 4px; height: 7px; }

.p-viz { width: 101px; padding: 0 3px 0 4px; }
.p-head { height: 20px; display: flex; align-items: center; justify-content: space-between; }
.p-title { font-size: 9px; line-height: 12px; color: #555; }
.p-strong { font-weight: 700; }
.head-i { width: 8px; height: 8px; flex: none; }
.viz-sub { font-size: 7px; height: 10px; line-height: 10px; }
.viz-tabs { height: 26px; margin: 2px -3px 0 -4px; padding: 1px 0 0 5px; border-bottom: 1px solid #d6d4d2; display: flex; position: relative; }
.viz-tabs::after { content: ""; position: absolute; left: 9px; bottom: -3px; width: 5px; height: 5px; background: #f6f5f4; border-left: 1px solid #d6d4d2; border-top: 1px solid #d6d4d2; transform: rotate(45deg); }
.vt { width: 16px; height: 18px; display: flex; align-items: center; justify-content: center; margin-right: 20px; }
.vt:nth-child(2) { margin-right: 21px; }
.vt svg { width: 15px; height: 15px; }
.vt-on svg { width: 14px; height: 14px; }
.vt-on { background: #e1dfdd; }
.viz-grid { display: grid; grid-template-columns: repeat(6, 15.600px); grid-auto-rows: 15.700px; margin: 3px 0 0 -1px; justify-items: center; align-items: center; height: 110px; }
.vi { width: 12px; height: 12px; }
.vi-sel { width: 14px; height: 14px; background: #dcdad8; display: flex; align-items: center; justify-content: center; }
.vi-t { font-family: "Noto Sans", sans-serif; font-weight: 700; font-size: 10px; color: #2f8fd8; }
.vi-more { font-size: 8px; color: #888; }
.sec-label { margin-top: 5px; font-size: 7px; height: 12px; line-height: 12px; }
.well { margin-top: 5px; width: 94px; background: #fff; height: 18px; }
.well-field { height: 13px; border: 1px solid #dedcda; background: #efeeed; display: flex; align-items: center; justify-content: space-between; padding: 0 2px; font-size: 7px; }
.well-i { width: 18px; height: 8px; }
.sec-drill { margin-top: 4px; }
.tog-row { display: flex; justify-content: space-between; align-items: center; height: 15px; font-size: 7px; width: 93px; }
.tog { width: 18px; height: 8px; border-radius: 4px; border: 1px solid #8a8886; background: #fff; display: flex; align-items: center; padding: 0 2px; }
.tog i { width: 4px; height: 4px; border-radius: 50%; background: #555; }
.tog-on { background: #444; border-color: #444; justify-content: space-between; }
.tog-on i { background: #fff; }
.tog-on b { color: #fff; font-size: 6px; line-height: 6px; font-family: "DejaVu Sans", sans-serif; }
.drop-zone { margin-top: 2px; width: 93px; height: 14px; background: #fff; border: 1px dashed #e4e2e0; display: flex; align-items: center; padding-left: 4px; font-size: 7px; }

.p-fields { width: 101px; padding: 0 3px 0 2px; }
.search { height: 15px; margin-top: 5px; width: 95px; background: #fff; border: 1px solid #8a8886; display: flex; align-items: center; gap: 4px; padding-left: 3px; font-size: 8px; color: #666; }
.search-i { width: 8px; height: 8px; }
.tree-root { display: flex; align-items: center; height: 15px; margin-top: 3px; font-size: 7px; gap: 2px; padding-left: 1px; }
.tree-c { width: 6px; height: 5px; }
.tree-i { position: relative; width: 9px; height: 9px; }
.tree-i svg { width: 9px; height: 8px; }
.tree-dot { position: absolute; right: -1px; bottom: -2px; width: 5px; height: 5px; border-radius: 50%; background: #f2c811; }
.fields { list-style: none; margin: 0; padding: 0 0 0 18px; }
.f { height: 13.330px; display: flex; align-items: center; font-size: 7px; }
.f .box { width: 7px; height: 7px; }
.sg { width: 7px; height: 9px; margin: 0 4px; flex: none; }

.status { height: 15px; flex: none; display: flex; align-items: center; justify-content: space-between; border-top: 1px solid #dcdad8; padding-left: 3px; font-size: 7px; color: #555; }
.zoom { display: flex; align-items: center; gap: 3px; }
.slider { width: 56px; height: 1px; background: #a19f9d; position: relative; }
.slider i { position: absolute; left: 26px; top: -3px; width: 3px; height: 7px; background: #555; }
.pct { margin: 0 11px 0 7px; font-size: 6.500px; }
.fit { width: 9px; height: 9px; margin-right: 10px; }
```
